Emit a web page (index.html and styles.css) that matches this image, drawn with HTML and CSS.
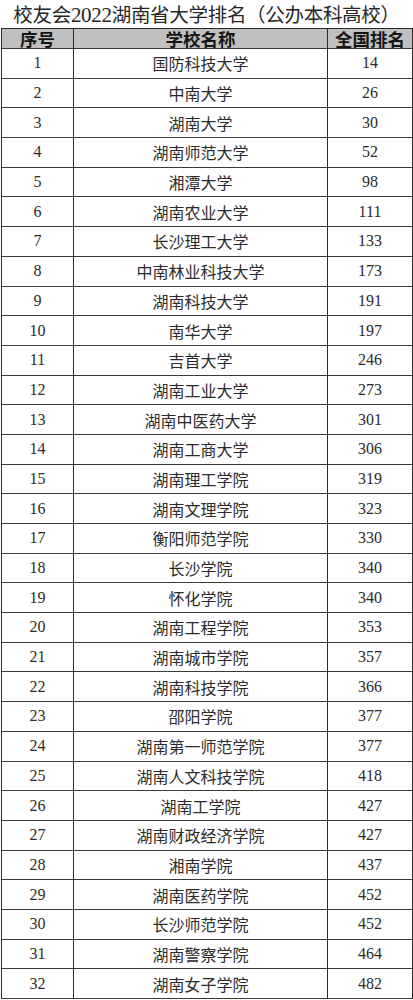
FILE: index.html
```html
<!DOCTYPE html>
<html lang="zh-CN">
<head>
<meta charset="utf-8">
<title>校友会2022湖南省大学排名（公办本科高校）</title>
<link rel="stylesheet" href="styles.css">
</head>
<body>
<div class="page">
  <h1 class="title">校友会<span class="num">2022</span>湖南省大学排名（公办本科高校）</h1>
  <div class="grid">
    <div class="cell head">序号</div><div class="cell head">学校名称</div><div class="cell head">全国排名</div>
    <div class="cell num">1</div><div class="cell">国防科技大学</div><div class="cell num">14</div>
    <div class="cell num">2</div><div class="cell">中南大学</div><div class="cell num">26</div>
    <div class="cell num">3</div><div class="cell">湖南大学</div><div class="cell num">30</div>
    <div class="cell num">4</div><div class="cell">湖南师范大学</div><div class="cell num">52</div>
    <div class="cell num">5</div><div class="cell">湘潭大学</div><div class="cell num">98</div>
    <div class="cell num">6</div><div class="cell">湖南农业大学</div><div class="cell num">111</div>
    <div class="cell num">7</div><div class="cell">长沙理工大学</div><div class="cell num">133</div>
    <div class="cell num">8</div><div class="cell">中南林业科技大学</div><div class="cell num">173</div>
    <div class="cell num">9</div><div class="cell">湖南科技大学</div><div class="cell num">191</div>
    <div class="cell num">10</div><div class="cell">南华大学</div><div class="cell num">197</div>
    <div class="cell num">11</div><div class="cell">吉首大学</div><div class="cell num">246</div>
    <div class="cell num">12</div><div class="cell">湖南工业大学</div><div class="cell num">273</div>
    <div class="cell num">13</div><div class="cell">湖南中医药大学</div><div class="cell num">301</div>
    <div class="cell num">14</div><div class="cell">湖南工商大学</div><div class="cell num">306</div>
    <div class="cell num">15</div><div class="cell">湖南理工学院</div><div class="cell num">319</div>
    <div class="cell num">16</div><div class="cell">湖南文理学院</div><div class="cell num">323</div>
    <div class="cell num">17</div><div class="cell">衡阳师范学院</div><div class="cell num">330</div>
    <div class="cell num">18</div><div class="cell">长沙学院</div><div class="cell num">340</div>
    <div class="cell num">19</div><div class="cell">怀化学院</div><div class="cell num">340</div>
    <div class="cell num">20</div><div class="cell">湖南工程学院</div><div class="cell num">353</div>
    <div class="cell num">21</div><div class="cell">湖南城市学院</div><div class="cell num">357</div>
    <div class="cell num">22</div><div class="cell">湖南科技学院</div><div class="cell num">366</div>
    <div class="cell num">23</div><div class="cell">邵阳学院</div><div class="cell num">377</div>
    <div class="cell num">24</div><div class="cell">湖南第一师范学院</div><div class="cell num">377</div>
    <div class="cell num">25</div><div class="cell">湖南人文科技学院</div><div class="cell num">418</div>
    <div class="cell num">26</div><div class="cell">湖南工学院</div><div class="cell num">427</div>
    <div class="cell num">27</div><div class="cell">湖南财政经济学院</div><div class="cell num">427</div>
    <div class="cell num">28</div><div class="cell">湘南学院</div><div class="cell num">437</div>
    <div class="cell num">29</div><div class="cell">湖南医药学院</div><div class="cell num">452</div>
    <div class="cell num">30</div><div class="cell">长沙师范学院</div><div class="cell num">452</div>
    <div class="cell num">31</div><div class="cell">湖南警察学院</div><div class="cell num">464</div>
    <div class="cell num">32</div><div class="cell">湖南女子学院</div><div class="cell num">482</div>
  </div>
</div>
</body>
</html>
```
FILE: styles.css
```css
html, body {
  margin: 0;
  padding: 0;
  background: #ffffff;
}
.page {
  width: 413px;
  font-family: "Noto Sans CJK SC", "Noto Sans", sans-serif;
  color: #2b2b2b;
}
.title {
  margin: 0;
  height: 28px;
  padding-top: 1px;
  box-sizing: border-box;
  font-size: 19.5px;
  font-weight: 400;
  line-height: 26px;
  text-align: center;
  color: #262626;
  letter-spacing: -0.3px;
}
.title .num {
  font-family: "Liberation Serif", serif;
  font-size: 21px;
}
.grid {
  margin-left: 1px;
  width: 412px;
  box-sizing: border-box;
  display: grid;
  grid-template-columns: 72px 254px 85px;
  grid-template-rows: 20px repeat(32, 29.7px);
  border-top: 1px solid #2a2a2a;
  border-left: 1px solid #2a2a2a;
}
.cell {
  box-sizing: border-box;
  border-right: 1px solid #2a2a2a;
  border-bottom: 1px solid #3a3a3a;
  display: flex;
  align-items: center;
  justify-content: center;
  font-size: 16px;
  line-height: 1;
  color: #2b2b2b;
}
.cell.head {
  background: #c0c0c0;
  font-weight: 700;
  font-size: 17.5px;
  color: #151515;
}
.cell.num {
  font-family: "Liberation Serif", serif;
  font-size: 16px;
}
```
